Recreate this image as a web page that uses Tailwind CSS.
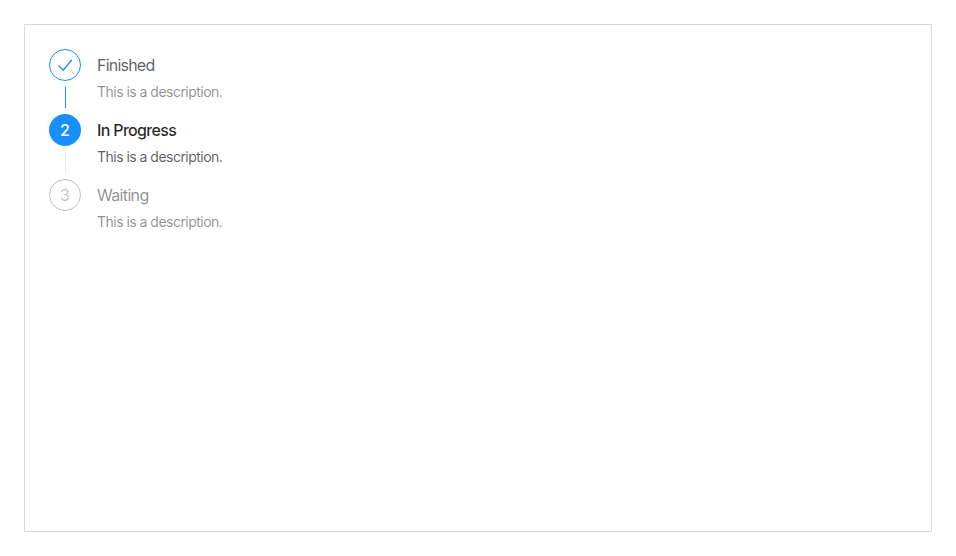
<!DOCTYPE html>
<html lang="en">
<head>
  <meta charset="UTF-8" />
  <title>Steps</title>
  <script src="https://cdn.jsdelivr.net/npm/@tailwindcss/browser@4"></script>
</head>
<body class="bg-white font-['Inter',sans-serif]">
  <div class="p-6 w-[956px] h-[556px]">
    <div class="w-[908px] h-[508px] border border-[#d9d9d9] p-6">

      <!-- finished -->
      <div class="flex gap-4 h-[65px]">
        <div class="flex flex-col items-center w-8">
          <div class="w-8 h-8 shrink-0 rounded-full border border-[#1890ff] flex items-center justify-center">
            <svg width="16" height="16" viewBox="0 0 16 16" fill="none" stroke="#1890ff" stroke-width="1.4"><path d="M1.4 8.6 L6.3 13.2 L14.8 2.8" /></svg>
          </div>
          <div class="w-px flex-1 my-1.5 bg-[#1890ff]"></div>
        </div>
        <div>
          <div class="h-8 leading-8 text-base tracking-[-0.78px] text-black/65">Finished</div>
          <div class="leading-[22px] text-sm tracking-[-0.52px] text-black/45">This is a description.</div>
        </div>
      </div>

      <!-- in progress -->
      <div class="flex gap-4 h-[65px]">
        <div class="flex flex-col items-center w-8">
          <div class="w-8 h-8 shrink-0 rounded-full bg-[#1890ff] text-white text-base font-medium flex items-center justify-center">2</div>
          <div class="w-px flex-1 my-1.5 bg-[#e8e8e8]"></div>
        </div>
        <div>
          <div class="h-8 leading-8 text-base font-medium tracking-[-0.66px] text-black/85">In Progress</div>
          <div class="leading-[22px] text-sm tracking-[-0.52px] text-black/65">This is a description.</div>
        </div>
      </div>

      <!-- waiting -->
      <div class="flex gap-4 h-[65px]">
        <div class="flex flex-col items-center w-8">
          <div class="w-8 h-8 shrink-0 rounded-full border border-black/25 text-black/25 text-base flex items-center justify-center">3</div>
        </div>
        <div>
          <div class="h-8 leading-8 text-base tracking-[-0.66px] text-black/45">Waiting</div>
          <div class="leading-[22px] text-sm tracking-[-0.52px] text-black/45">This is a description.</div>
        </div>
      </div>

    </div>
  </div>
</body>
</html>
